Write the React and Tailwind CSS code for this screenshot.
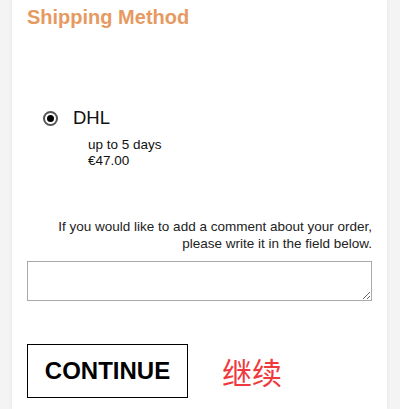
import React, { useState } from 'react';

const font = { fontFamily: '"Liberation Sans", Arial, "Noto Sans CJK SC", sans-serif' };

export default function App() {
    const [comment, setComment] = useState('');

    return (
        <div className="min-h-[409px] h-[409px] overflow-hidden bg-[#f4f4f4]" style={font}>
            <div className="ml-[12px] mr-[13px] h-full bg-white shadow-[0_0_4px_rgba(0,0,0,0.08)] px-[15px]">
                <h2 className="pt-[6px] text-[20px] leading-[23px] font-bold text-[#e69a62]">
                    Shipping Method
                </h2>

                {/* shipping option */}
                <div className="mt-[78px] pl-[16px]">
                    <label className="flex items-center gap-[15px]">
                        <span className="w-[15px] h-[15px] rounded-full border-2 border-[#555] flex items-center justify-center">
                            <span className="w-[7px] h-[7px] rounded-full bg-black" />
                        </span>
                        <span className="text-[18.5px] leading-[22px] text-[#111]">DHL</span>
                    </label>
                    <div className="pl-[45px] mt-[8px] text-[13.5px] leading-[16px] text-[#111]">
                        <div>up to 5 days</div>
                        <div>€47.00</div>
                    </div>
                </div>

                <p className="mt-[49px] text-right text-[13.5px] leading-[17px] text-[#222]">
                    If you would like to add a comment about your order,<br />
                    please write it in the field below.
                </p>

                <textarea
                    value={comment}
                    onChange={(e) => setComment(e.target.value)}
                    className="block mt-[9px] w-full h-[40px] border border-[#a9a9a9] outline-none resize-y text-[13px] p-1"
                />

                <div className="mt-[43px] flex items-center">
                    <button className="w-[161px] h-[54px] border-[1.5px] border-black bg-white text-[24px] font-bold text-black">
                        CONTINUE
                    </button>
                    <span className="ml-[34px] text-[30px] leading-[34px] text-[#f0393c]" style={{ fontFamily: '"Noto Sans CJK SC", sans-serif' }}>
                        继续
                    </span>
                </div>
            </div>
        </div>
    );
}
